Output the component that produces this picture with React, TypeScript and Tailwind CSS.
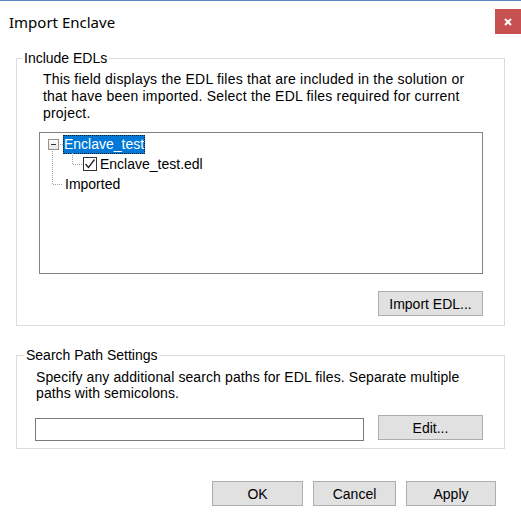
import React from "react";

const font = { fontFamily: '"Liberation Sans", Arial, sans-serif' };

const Btn = ({ label, w }: { label: string; w: string }) => (
  <button
    className={`${w} h-[25px] border border-[#adadad] bg-[#e1e1e1] text-[14px] text-black leading-none`}
  >
    {label}
  </button>
);

const App = () => {
  return (
    <div
      className="w-[521px] h-[523px] bg-white border-t border-[#5b88c6] text-[14px] text-black overflow-hidden"
      style={font}
    >
      {/* title bar */}
      <div className="flex justify-between items-center pt-[8px] h-[33px]">
        <span className="pl-[9px] text-[15px] mt-[1px]" style={{ fontFamily: '"Noto Sans", "Liberation Sans", sans-serif' }}>
          Import Enclave
        </span>
        <div className="w-[26px] h-[25px] bg-[#c75050] flex items-center justify-center">
          <svg width="8" height="8" viewBox="0 0 8 8">
            <path d="M1 1 L7 7 M7 1 L1 7" stroke="white" strokeWidth="2" />
          </svg>
        </div>
      </div>

      {/* Include EDLs */}
      <fieldset className="mx-[16px] mt-[16px] border border-[#dcdcdc] pl-[22px] pr-[21px] pb-[9px]">
        <legend className="-ml-[17px] px-[2px] leading-[16px]">Include EDLs</legend>
        <p className="pl-[4px] pt-[5px] leading-[17px] tracking-[0.2px]">
          This field displays the EDL files that are included in the solution or
          <br />
          that have been imported. Select the EDL files required for current
          <br />
          project.
        </p>
        <div className="relative mt-[10px] h-[142px] border border-[#828282] pt-[1px]">
          <svg className="absolute left-0 top-0" width="60" height="60">
            <g stroke="#a0a0a0" strokeWidth="1" strokeDasharray="1 1" fill="none">
              <path d="M12.5 16 V51.5 H23" />
              <path d="M18 11.5 H23" />
              <path d="M32.5 20 V31.5 H43" />
            </g>
          </svg>
          <div className="flex items-center h-[20px] pl-[8px]">
            <div className="relative w-[11px] h-[11px] border border-[#919191] bg-gradient-to-b from-white to-[#e6e6e6] flex items-center justify-center">
              <div className="w-[5px] h-[1px] bg-[#333]" />
            </div>
            <span className="ml-[4px] px-[1px] h-[19px] flex items-center bg-[#0078d7] text-white outline outline-1 outline-dotted outline-[#1a1a1a] -outline-offset-1">
              Enclave_test
            </span>
          </div>
          <div className="flex items-center h-[20px] pl-[43px]">
            <div className="w-[14px] h-[14px] border border-[#333] bg-white flex items-center justify-center">
              <svg width="12" height="12" viewBox="0 0 12 12">
                <path d="M1.5 6 L4.5 9.5 L10.5 1.5" stroke="#222" strokeWidth="1.3" fill="none" />
              </svg>
            </div>
            <span className="ml-[3px]">Enclave_test.edl</span>
          </div>
          <div className="flex items-center h-[20px] pl-[25px]">
            <span>Imported</span>
          </div>
        </div>
        <div className="flex justify-end mt-[17px]">
          <Btn label="Import EDL..." w="w-[105px]" />
        </div>
      </fieldset>

      {/* Search Path Settings */}
      <fieldset className="mx-[16px] mt-[21px] border border-[#dcdcdc] pl-[18px] pr-[21px] pb-[7px]">
        <legend className="-ml-[11px] px-[2px] leading-[16px]">Search Path Settings</legend>
        <p className="pl-[1px] pt-[6px] leading-[16px] tracking-[0.1px]">
          Specify any additional search paths for EDL files. Separate multiple
          <br />
          paths with semicolons.
        </p>
        <div className="flex items-start justify-between mt-[14px]">
          <div className="mt-[3px] w-[329px] h-[23px] border border-[#7a7a7a] bg-white" />
          <Btn label="Edit..." w="w-[105px]" />
        </div>
      </fieldset>

      {/* footer buttons */}
      <div className="flex justify-end gap-[10px] pr-[25px] mt-[32px]">
        <Btn label="OK" w="w-[91px]" />
        <Btn label="Cancel" w="w-[83px]" />
        <Btn label="Apply" w="w-[90px]" />
      </div>
    </div>
  );
};

export default App;
